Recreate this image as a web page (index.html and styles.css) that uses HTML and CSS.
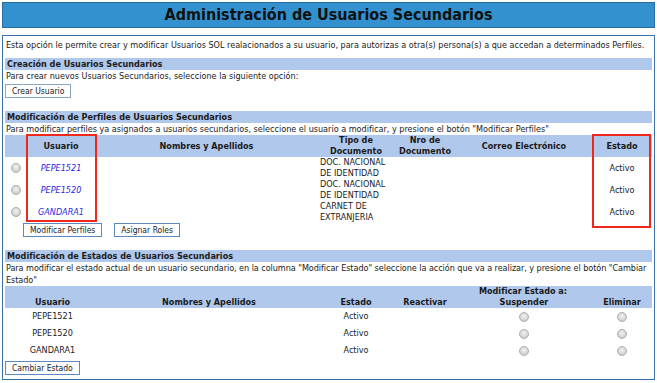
FILE: index.html
```html
<!DOCTYPE html>
<html lang="es">
<head>
    <meta charset="UTF-8">
    <title>Administración de Usuarios Secundarios</title>
    <link rel="stylesheet" href="styles.css">
</head>
<body>
    <div class="title-bar">Administración de Usuarios Secundarios</div>

    <div class="panel">
        <p class="intro">Esta opción le permite crear y modificar Usuarios SOL realacionados a su usuario, para autorizas a otra(s) persona(s) a que accedan a determinados Perfiles.</p>

        <div class="section-title">Creación de Usuarios Secundarios</div>
        <p class="hint">Para crear nuevos Usuarios Secundarios, seleccione la siguiente opción:</p>
        <div class="actions">
            <button class="btn light">Crear Usuario</button>
        </div>

        <div class="section-title gap-top">Modificación de Perfiles de Usuarios Secundarios</div>
        <p class="hint">Para modificar perfiles ya asignados a usuarios secundarios, seleccione el usuario a modificar, y presione el botón "Modificar Perfiles"</p>

        <div class="table-wrap">
            <table class="grid profiles">
                <colgroup>
                    <col style="width: 22px">
                    <col style="width: 68px">
                    <col style="width: 223px">
                    <col style="width: 76px">
                    <col style="width: 62px">
                    <col style="width: 136px">
                    <col style="width: 60px">
                </colgroup>
                <thead>
                    <tr>
                        <th></th>
                        <th>Usuario</th>
                        <th>Nombres y Apellidos</th>
                        <th>Tipo de<br>Documento</th>
                        <th>Nro de<br>Documento</th>
                        <th>Correo Electrónico</th>
                        <th>Estado</th>
                    </tr>
                </thead>
                <tbody>
                    <tr>
                        <td><span class="radio"></span></td>
                        <td><a href="#" class="user-link">PEPE1521</a></td>
                        <td></td>
                        <td class="left">DOC. NACIONAL<br>DE IDENTIDAD</td>
                        <td></td>
                        <td></td>
                        <td>Activo</td>
                    </tr>
                    <tr>
                        <td><span class="radio"></span></td>
                        <td><a href="#" class="user-link">PEPE1520</a></td>
                        <td></td>
                        <td class="left">DOC. NACIONAL<br>DE IDENTIDAD</td>
                        <td></td>
                        <td></td>
                        <td>Activo</td>
                    </tr>
                    <tr>
                        <td><span class="radio"></span></td>
                        <td><a href="#" class="user-link">GANDARA1</a></td>
                        <td></td>
                        <td class="left">CARNET DE<br>EXTRANJERIA</td>
                        <td></td>
                        <td></td>
                        <td>Activo</td>
                    </tr>
                </tbody>
            </table>
            <div class="mark mark-user"></div>
            <div class="mark mark-state"></div>
        </div>

        <div class="actions indent">
            <button class="btn">Modificar Perfiles</button>
            <button class="btn">Asignar Roles</button>
        </div>

        <div class="section-title gap-top">Modificación de Estados de Usuarios Secundarios</div>
        <p class="hint tight">Para modificar el estado actual de un usuario secundario, en la columna "Modificar Estado" seleccione la acción que va a realizar, y presione el botón "Cambiar Estado"</p>

        <table class="grid states">
            <colgroup>
                <col style="width: 95px">
                <col style="width: 218px">
                <col style="width: 76px">
                <col style="width: 62px">
                <col style="width: 136px">
                <col style="width: 60px">
            </colgroup>
            <thead>
                <tr>
                    <th rowspan="2" class="bottom">Usuario</th>
                    <th rowspan="2" class="bottom">Nombres y Apellidos</th>
                    <th rowspan="2" class="bottom">Estado</th>
                    <th colspan="3">Modificar Estado a:</th>
                </tr>
                <tr>
                    <th>Reactivar</th>
                    <th>Suspender</th>
                    <th>Eliminar</th>
                </tr>
            </thead>
            <tbody>
                <tr>
                    <td>PEPE1521</td>
                    <td></td>
                    <td>Activo</td>
                    <td></td>
                    <td><span class="radio"></span></td>
                    <td><span class="radio"></span></td>
                </tr>
                <tr>
                    <td>PEPE1520</td>
                    <td></td>
                    <td>Activo</td>
                    <td></td>
                    <td><span class="radio"></span></td>
                    <td><span class="radio"></span></td>
                </tr>
                <tr>
                    <td>GANDARA1</td>
                    <td></td>
                    <td>Activo</td>
                    <td></td>
                    <td><span class="radio"></span></td>
                    <td><span class="radio"></span></td>
                </tr>
            </tbody>
        </table>

        <div class="actions">
            <button class="btn">Cambiar Estado</button>
        </div>
    </div>
</body>
</html>
```

FILE: styles.css
```css
body {
    font-family: "DejaVu Sans Condensed", "DejaVu Sans", sans-serif;
    font-stretch: condensed;
    font-size: 9px;
    color: #1a1a1a;
    margin: 0;
    padding: 2px;
    background-color: white;
}

.title-bar {
    background-color: #3291ce;
    border: 1px solid #2a6aa0;
    color: #111;
    font-size: 16px;
    font-weight: bold;
    text-align: center;
    height: 24px;
    line-height: 24px;
}

.panel {
    margin-top: 7px;
    border: 1px solid #3a70a8;
    padding: 3px 2px 4px 2px;
}

p {
    margin: 0;
}

.intro {
    line-height: 12px;
    padding: 0 1px;
}

.section-title {
    background-color: #b0c8ec;
    font-weight: bold;
    line-height: 12px;
    padding: 0 2px;
    margin-top: 7px;
}

.section-title.gap-top {
    margin-top: 13px;
}

.hint {
    line-height: 12px;
    padding-left: 1px;
    margin-right: -2px;
}

.hint.tight {
    letter-spacing: -0.05px;
}

.actions {
    display: flex;
    gap: 12px;
    margin-top: 2px;
}

.actions.indent {
    padding-left: 18px;
    margin-top: 0;
}

.btn {
    font-family: inherit;
    font-stretch: condensed;
    font-size: 8.5px;
    color: #222;
    background-color: white;
    border: 1px solid #5b88bd;
    border-radius: 0;
    padding: 0 6px;
    height: 14px;
    line-height: 12px;
}

.btn.light {
    border-color: #8aa6c6;
}

.table-wrap {
    position: relative;
}

.grid {
    border-collapse: collapse;
    width: 647px;
    table-layout: fixed;
}

.grid th {
    background-color: #b0c8ec;
    font-weight: bold;
    text-align: center;
    padding: 0;
    line-height: 11px;
}

.grid td {
    padding: 0;
    text-align: center;
    line-height: 11px;
}

.profiles thead th {
    height: 22px;
}

.profiles tbody td {
    height: 22px;
}

.profiles td.left {
    text-align: left;
    padding-left: 2px;
}

.user-link {
    color: #2a2ae0;
    font-style: italic;
    text-decoration: none;
}

.states thead th {
    height: 11px;
}

.states th.bottom {
    vertical-align: bottom;
}

.states tbody td {
    height: 17px;
}

.radio {
    display: inline-block;
    width: 10px;
    height: 10px;
    border-radius: 50%;
    background: radial-gradient(circle at 50% 40%, #f2f2f2 0%, #d4d4d4 60%, #b8b8b8 100%);
    border: 1px solid #b0b0b0;
    box-sizing: border-box;
    vertical-align: middle;
}

.mark {
    position: absolute;
    border: 2px solid #f0281c;
}

.mark-user {
    left: 21px;
    top: -1px;
    width: 67px;
    height: 84px;
}

.mark-state {
    left: 587px;
    top: -1px;
    width: 55px;
    height: 90px;
}
```
